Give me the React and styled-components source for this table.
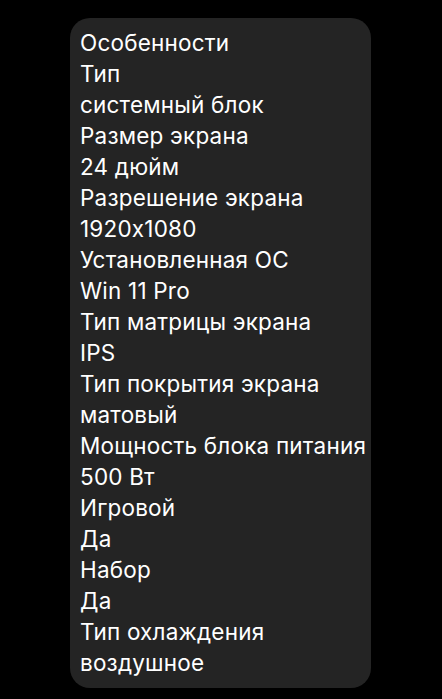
import React from 'react'
import styled, { createGlobalStyle } from 'styled-components'

const GlobalStyle = createGlobalStyle`
    html, body {
        margin: 0;
        padding: 0;
        background: #000;
    }
`;

const Page = styled.div`
    min-height: 699px;
    background: #000;
    padding: 18px 0 0 70px;
    box-sizing: border-box;
`;

const Card = styled.div`
    width: 301px;
    box-sizing: border-box;
    background-color: #242424;
    border-radius: 20px;
    padding: 9px 0 10px 10px;
    display: flex;
    flex-direction: column;
`;

const Line = styled.div`
    color: #fff;
    font-family: 'Inter', 'Roboto', sans-serif;
    font-size: 22.5px;
    font-feature-settings: 'calt' 0;
    letter-spacing: 0.2px;
    line-height: 31px;
    white-space: nowrap;
`;

const specs = [
    ['Тип', 'системный блок'],
    ['Размер экрана', '24 дюйм'],
    ['Разрешение экрана', '1920x1080'],
    ['Установленная ОС', 'Win 11 Pro'],
    ['Тип матрицы экрана', 'IPS'],
    ['Тип покрытия экрана', 'матовый'],
    ['Мощность блока питания', '500 Вт'],
    ['Игровой', 'Да'],
    ['Набор', 'Да'],
    ['Тип охлаждения', 'воздушное'],
];

export default function App() {
    return (
        <Page>
            <GlobalStyle />
            <Card>
                <Line>Особенности</Line>
                {specs.map(([label, value]) => (
                    <React.Fragment key={label}>
                        <Line>{label}</Line>
                        <Line>{value}</Line>
                    </React.Fragment>
                ))}
            </Card>
        </Page>
    )
}
